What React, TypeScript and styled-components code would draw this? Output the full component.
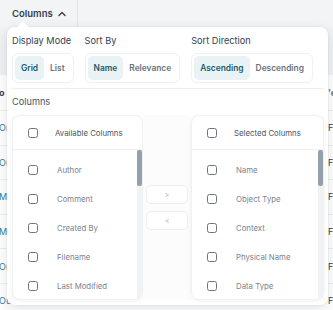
import React from "react";
import styled, { createGlobalStyle } from "styled-components";

const GlobalStyle = createGlobalStyle`
  html, body { margin: 0; padding: 0; }
  body {
    font-family: Inter, "Noto Sans", "Liberation Sans", sans-serif;
    background: #f3f4f6;
    -webkit-font-smoothing: antialiased;
  }
  * { box-sizing: border-box; }
`;

const Page = styled.div`
  position: relative;
  width: 333px;
  height: 310px;
  overflow: hidden;
  background: #f3f4f6;
`;

const Toolbar = styled.div`
  height: 27px;
  display: flex;
  align-items: stretch;
  background: #f3f4f6;
`;

const ColumnsToggle = styled.div`
  display: flex;
  align-items: center;
  gap: 5px;
  padding: 0 11px 0 12px;
  border-right: 1px solid #e4e6ea;
  font-size: 9.5px;
  font-weight: 600;
  color: #374151;
`;

const FilterBar = styled.div`
  height: 48px;
  background: #f1f2f4;
`;

const Table = styled.div`
  background: #ffffff;
`;

const Row = styled.div<{ $header?: boolean }>`
  height: ${(p) => (p.$header ? "36px" : "34.6px")};
  display: flex;
  align-items: center;
  justify-content: space-between;
  border-bottom: 1px solid #eceef1;
  font-size: 9px;
  font-weight: ${(p) => (p.$header ? 700 : 400)};
`;

const LeftCell = styled.span<{ $header?: boolean }>`
  color: ${(p) => (p.$header ? "#374151" : "#2f7ea3")};
  margin-left: -1px;
`;

const RightCell = styled.span<{ $header?: boolean }>`
  color: ${(p) => (p.$header ? "#6b7280" : "#374151")};
  width: 5px;
  overflow: hidden;
  white-space: nowrap;
`;

const Popover = styled.div`
  position: absolute;
  top: 27px;
  left: 7px;
  width: 321px;
  height: 278px;
  background: #ffffff;
  border-radius: 8px;
  box-shadow: 0 4px 14px rgba(15, 23, 42, 0.12), 0 0 0 1px rgba(15, 23, 42, 0.03);
  padding: 6px 4px 5px 5px;
  display: flex;
  flex-direction: column;
  &::before {
    content: "";
    position: absolute;
    top: -4px;
    left: 12px;
    width: 8px;
    height: 8px;
    background: #ffffff;
    transform: rotate(45deg);
  }
`;

const Controls = styled.div`
  display: flex;
  gap: 11px;
  padding-bottom: 5px;
  border-bottom: 1px solid #eeeff1;
`;

const Control = styled.div`
  display: flex;
  flex-direction: column;
  gap: 6px;
`;

const ControlLabel = styled.div`
  font-size: 9.2px;
  line-height: 13px;
  color: #374151;
  padding-top: 1px;
`;

const Segmented = styled.div`
  display: flex;
  padding: 2px;
  border: 1px solid #f0f1f3;
  border-radius: 6px;
  box-shadow: 0 1px 2px rgba(0, 0, 0, 0.02);
`;

const Chip = styled.div<{ $active?: boolean }>`
  height: 24px;
  padding: 0 6px;
  display: flex;
  align-items: center;
  border-radius: 5px;
  font-size: 8.4px;
  font-weight: 600;
  background: ${(p) => (p.$active ? "#e9f2f4" : "transparent")};
  color: ${(p) => (p.$active ? "#1d5b6c" : "#6b7280")};
`;

const SectionLabel = styled.div`
  font-size: 9.2px;
  line-height: 12px;
  color: #4b5563;
  margin: 7px 0 7px;
`;

const Lists = styled.div`
  display: flex;
  align-items: stretch;
  height: 185px;
`;

const Panel = styled.div<{ $width: number }>`
  width: ${(p) => p.$width}px;
  display: flex;
  flex-direction: column;
  border: 1px solid #f0f1f3;
  border-radius: 8px;
  box-shadow: 0 1px 4px rgba(15, 23, 42, 0.06);
  overflow: hidden;
  background: #ffffff;
`;

const PanelHeader = styled.div`
  height: 34px;
  flex: none;
  display: flex;
  align-items: center;
  gap: 17px;
  padding-left: 15px;
  border-bottom: 1px solid #eff0f2;
  font-size: 7.8px;
  color: #4b5563;
`;

const PanelBody = styled.div`
  flex: 1;
  display: flex;
  min-height: 0;
`;

const List = styled.div`
  flex: 1;
  padding-top: 5px;
  overflow: hidden;
`;

const Item = styled.div`
  height: 29px;
  display: flex;
  align-items: center;
  gap: 19px;
  padding-left: 15px;
  font-size: 7.8px;
  color: #7b8290;
`;

const Box = styled.span`
  width: 10px;
  height: 10px;
  flex: none;
  border: 1.5px solid #6b7280;
  border-radius: 2.5px;
  background: #ffffff;
`;

const Track = styled.div`
  width: 5px;
  flex: none;
  background: #f1f2f4;
  position: relative;
`;

const Thumb = styled.div`
  height: 36px;
  background: #94a0ae;
  border-radius: 2px;
`;

const Middle = styled.div`
  width: 48px;
  flex: none;
  display: flex;
  flex-direction: column;
  justify-content: center;
  align-items: center;
  gap: 7px;
  background: #fcfcfd;
`;

const MoveButton = styled.div`
  width: 42px;
  height: 19px;
  border: 1px solid #eceef1;
  border-radius: 5px;
  background: #ffffff;
  display: flex;
  align-items: center;
  justify-content: center;
  font-size: 7px;
  color: #9ca3af;
`;

const Chevron = () => (
  <svg width="8" height="6" viewBox="0 0 8 6" fill="none">
    <path d="M1 4.5L4 1.5L7 4.5" stroke="#374151" strokeWidth="1.4" strokeLinecap="round" strokeLinejoin="round" />
  </svg>
);

const tableRows = [
  ["Or", "F"],
  ["Or", "F"],
  ["M", "F"],
  ["M", "F"],
  ["Or", "F"],
  ["Ou", "F"],
];

const available = ["Author", "Comment", "Created By", "Filename", "Last Modified"];
const selected = ["Name", "Object Type", "Context", "Physical Name", "Data Type"];

const ColumnPanel = ({ title, items, width }: { title: string; items: string[]; width: number }) => (
  <Panel $width={width}>
    <PanelHeader>
      <Box />
      <span>{title}</span>
    </PanelHeader>
    <PanelBody>
      <List>
        {items.map((it) => (
          <Item key={it}>
            <Box />
            <span>{it}</span>
          </Item>
        ))}
      </List>
      <Track>
        <Thumb />
      </Track>
    </PanelBody>
  </Panel>
);

export default function App() {
  return (
    <>
      <GlobalStyle />
      <Page>
        <Toolbar>
          <ColumnsToggle>
            Columns <Chevron />
          </ColumnsToggle>
        </Toolbar>
        <FilterBar />
        <Table>
          <Row $header>
            <LeftCell $header>o</LeftCell>
            <RightCell $header>'e</RightCell>
          </Row>
          {tableRows.map((r, i) => (
            <Row key={i}>
              <LeftCell>{r[0]}</LeftCell>
              <RightCell>{r[1]}</RightCell>
            </Row>
          ))}
        </Table>
        <Popover>
          <Controls>
            <Control>
              <ControlLabel>Display Mode</ControlLabel>
              <Segmented>
                <Chip $active>Grid</Chip>
                <Chip>List</Chip>
              </Segmented>
            </Control>
            <Control>
              <ControlLabel>Sort By</ControlLabel>
              <Segmented>
                <Chip $active>Name</Chip>
                <Chip>Relevance</Chip>
              </Segmented>
            </Control>
            <Control>
              <ControlLabel>Sort Direction</ControlLabel>
              <Segmented>
                <Chip $active>Ascending</Chip>
                <Chip>Descending</Chip>
              </Segmented>
            </Control>
          </Controls>
          <SectionLabel>Columns</SectionLabel>
          <Lists>
            <ColumnPanel title="Available Columns" items={available} width={131} />
            <Middle>
              <MoveButton>&gt;</MoveButton>
              <MoveButton>&lt;</MoveButton>
            </Middle>
            <ColumnPanel title="Selected Columns" items={selected} width={133} />
          </Lists>
        </Popover>
      </Page>
    </>
  );
}
